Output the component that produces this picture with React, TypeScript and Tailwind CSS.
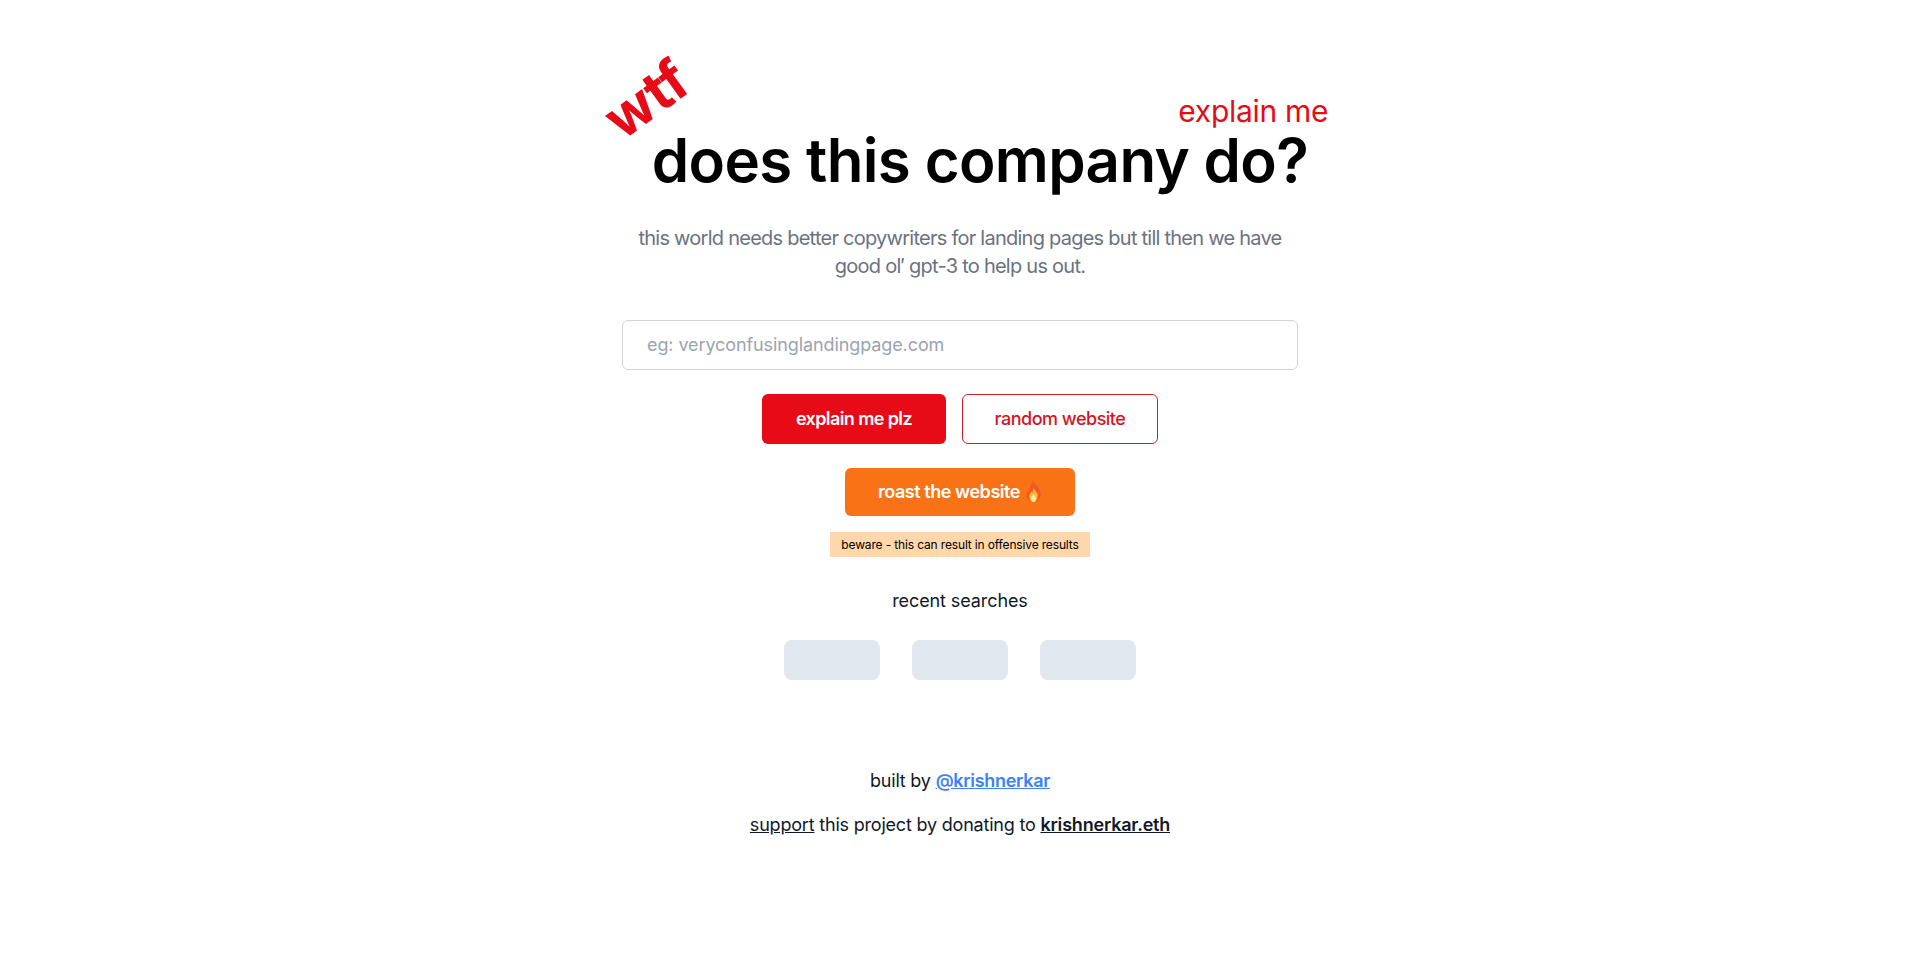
import React from 'react';

const Flame = () => (
  <svg viewBox="0 0 16 20" className="inline-block w-[17px] h-[21px] ml-[5px] align-[-4px]">
    <path d="M8 0c.6 3 4 4.500 5.800 8 1.700 3.400 1.300 6.300-.3 8.500C12 18.800 10 20 8 20c-2.400 0-4.600-1.200-6-3.400C.6 14.300.8 11.500 2.300 9.200c.4 1.200 1 2 1.900 2.400C3.600 7.500 5.500 2.800 8 0z" fill="#ef5a24" />
    <path d="M8.300 6.500c.4 2.300 3 3.800 3.700 6.400.6 2.600-1.100 7.100-4 7.100-2.900 0-4.700-3.500-3.800-6.400.5-1.700 1.600-2.700 2.100-3.700.4.700.7 1.100 1.100 1.300-.2-1.600 0-3.300.9-4.700z" fill="#ffb52e" />
    <path d="M8 12c.3 1.500 2.400 2.600 2.400 5 0 1.800-1.200 3-2.400 3s-2.500-1.300-2.500-3.200c0-2 2-3 2.500-4.800z" fill="#ffe9a8" />
  </svg>
);

export default function App() {
  return (
    <div className="min-h-[958px] bg-white font-['Inter',sans-serif] text-black">
      <main className="flex flex-col items-center pt-[127px]">
        <div className="relative ml-[40px]">
          <span className="absolute left-[-50px] top-[-56px] -rotate-[36deg] text-[56px] leading-none font-bold text-[#e60b16]">wtf</span>
          <span className="absolute right-[-20px] top-[-34px] text-[30px] leading-[36px] tracking-[-0.3px] text-[#e60b16]">explain me</span>
          <h1 className="text-[60px] leading-[66px] font-semibold tracking-[-0.65px]">does this company do?</h1>
        </div>

        <p className="mt-[31px] w-[672px] text-center text-[20px] leading-[28px] tracking-[-0.75px] text-[#6b7280]">
          this world needs better copywriters for landing pages but till then we have good ol&#8242; gpt-3 to help us out.
        </p>

        <input
          placeholder="eg: veryconfusinglandingpage.com"
          className="mt-[40px] h-[50px] w-[676px] rounded-md border border-[#d1d5db] px-[24px] pb-[2px] text-[18px] tracking-[-0.1px] outline-none placeholder:text-[#9ca3af]"
        />

        <div className="mt-[24px] flex gap-[16px]">
          <button className="h-[50px] w-[184px] rounded-md bg-[#e60b16] pb-[2px] text-[18px] font-semibold tracking-[-0.6px] text-white">explain me plz</button>
          <button className="h-[50px] w-[196px] rounded-md border border-[#d01c2c] pb-[2px] text-[18px] font-medium tracking-[-0.5px] text-[#d41526]">random website</button>
        </div>

        <button className="mt-[24px] h-[48px] w-[230px] rounded-md bg-[#f97316] pb-[2px] text-[18px] font-semibold tracking-[-0.45px] text-white">
          roast the website<Flame />
        </button>

        <div className="mt-[16px] flex h-[25px] w-[260px] items-center justify-center bg-[#fed7aa] text-[12px] tracking-[-0.15px]">
          beware - this can result in offensive results
        </div>

        <p className="mt-[30px] text-[18px] leading-[28px] tracking-[-0.1px] text-[#111827]">recent searches</p>

        <div className="mt-[25px] flex gap-[32px]">
          <div className="h-[40px] w-[96px] rounded-lg bg-[#e2e8f0]" />
          <div className="h-[40px] w-[96px] rounded-lg bg-[#e2e8f0]" />
          <div className="h-[40px] w-[96px] rounded-lg bg-[#e2e8f0]" />
        </div>

        <p className="mt-[87px] text-[18px] leading-[28px] tracking-[-0.2px] text-[#111827]">
          built by <a className="font-semibold tracking-[-0.3px] text-[#3b82f6] underline">@krishnerkar</a>
        </p>
        <p className="mt-[16px] text-[18px] leading-[28px] tracking-[-0.2px] text-[#111827]">
          <a className="underline">support</a> this project by donating to <a className="font-semibold underline">krishnerkar.eth</a>
        </p>
      </main>
    </div>
  );
}
